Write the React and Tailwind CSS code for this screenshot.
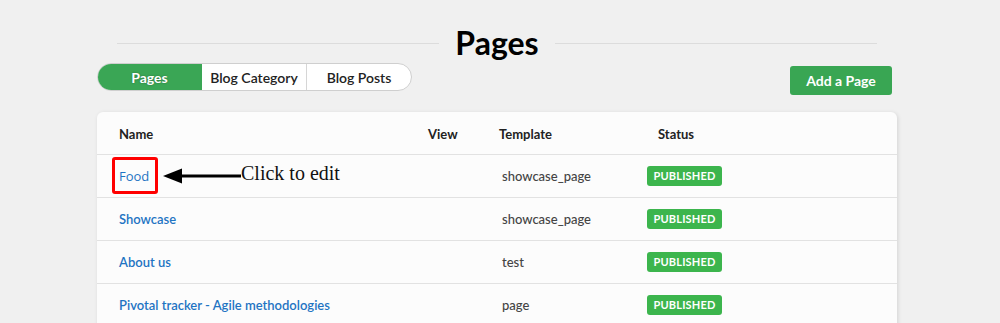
import React from "react";

const rows = [
  { name: "Food", template: "showcase_page" },
  { name: "Showcase", template: "showcase_page" },
  { name: "About us", template: "test" },
  { name: "Pivotal tracker - Agile methodologies", template: "page" },
];

export default function App() {
  return (
    <div className="min-h-[323px] bg-[#f0f0f0] overflow-hidden" style={{ fontFamily: "Lato, 'Open Sans', sans-serif" }}>
      <div className="ml-[97px] w-[800px] pt-[23px]">
        <div className="flex items-center px-[20px] h-[40px]">
          <div className="flex-1 h-px bg-[#dcdcdc]" />
          <h1 className="px-[16px] text-[32px] leading-[40px] font-bold text-black">Pages</h1>
          <div className="flex-1 h-px bg-[#dcdcdc]" />
        </div>
        <div className="flex items-start justify-between">
          <div className="flex h-[28px] rounded-full border border-[#cfcfcf] bg-white overflow-hidden text-[14px] font-bold">
            <div className="w-[105px] -my-px -ml-px flex items-center justify-center bg-[#3aa655] text-white rounded-l-full [text-shadow:0_0_2px_rgba(0,0,0,0.35)]">Pages</div>
            <div className="w-[105px] flex items-center justify-center font-semibold text-[#222] border-r border-[#d6d6d6]">Blog Category</div>
            <div className="w-[104px] flex items-center justify-center font-semibold text-[#222]">Blog Posts</div>
          </div>
          <button className="mt-[3px] mr-[5px] h-[29px] w-[102px] rounded-[3px] bg-[#39a653] text-white text-[14px] font-bold">Add a Page</button>
        </div>
        <div className="mt-[17px] bg-[#fcfcfc] rounded-t-[6px] shadow-[1px_1px_4px_rgba(0,0,0,0.12)]">
          <div className="flex items-center h-[43px] pt-[3px] border-b border-[#e2e2e2] text-[13px] font-bold text-[#222]">
            <div className="w-[331px] pl-[22px]">Name</div>
            <div className="w-[71px]">View</div>
            <div className="w-[159px]">Template</div>
            <div>Status</div>
          </div>
          {rows.map((r, i) => (
            <div key={i} className="relative flex items-center h-[43px] border-b border-[#e2e2e2] text-[13px]">
              <div className="w-[405px] pl-[22px] pt-[2px] font-semibold text-[#1f74c3]">
                {i === 0 ? (
                  <span className="font-normal" style={{ fontFamily: "'Open Sans', sans-serif" }}>{r.name}</span>
                ) : (
                  r.name
                )}
              </div>
              <div className="w-[145px] pt-[2px] text-[#444] font-medium">{r.template}</div>
              <div className="h-[20px] w-[75px] rounded-[3px] bg-[#3cb54d] text-white text-[11px] font-bold flex items-center justify-center tracking-[0.2px]">PUBLISHED</div>
              {i === 0 && (
                <>
                  <div className="absolute left-[15px] top-[2px] w-[46px] h-[37px] border-[3px] border-[#ff0000] rounded-[3px]" />
                  <svg className="absolute left-[66px] top-[13px]" width="78" height="16" viewBox="0 0 78 16">
                    <polygon points="0,8 19,0.5 19,15.5" fill="#000" />
                    <rect x="17" y="6.5" width="61" height="3" fill="#000" />
                  </svg>
                  <div className="absolute left-[144px] top-[6px] text-[20px] leading-[24px] text-[#111]" style={{ fontFamily: "'Liberation Serif', serif" }}>
                    Click to edit
                  </div>
                </>
              )}
            </div>
          ))}
        </div>
      </div>
    </div>
  );
}
